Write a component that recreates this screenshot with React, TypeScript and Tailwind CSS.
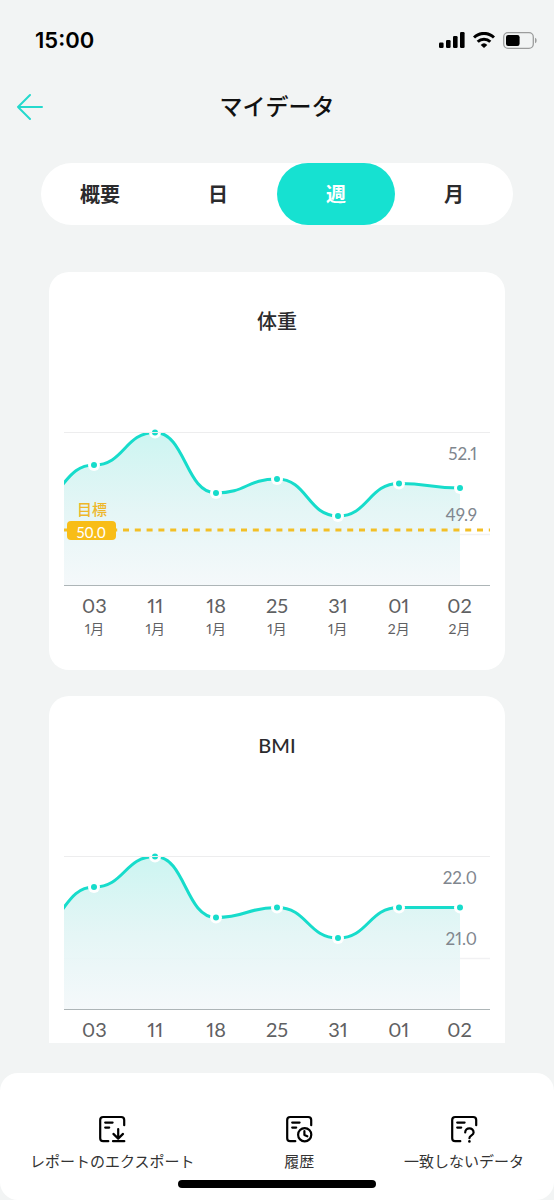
import React from 'react';

type ChartData = {
  id: string;
  title: string;
  // y of each weekly point, the first one lies left of the visible plot
  points: number[];
  ticks: string[];
  gridY: number;
  showMonths?: boolean;
  target?: { label: string; value: string; y: number };
};

const tabs = ['概要', '日', '週', '月'];

const weeks = [
  { day: '03', month: '1月' },
  { day: '11', month: '1月' },
  { day: '18', month: '1月' },
  { day: '25', month: '1月' },
  { day: '31', month: '1月' },
  { day: '01', month: '2月' },
  { day: '02', month: '2月' },
];

const charts: ChartData[] = [
  {
    id: 'weight',
    title: '体重',
    points: [78, 41, 8.5, 69, 55, 92, 59.5, 64],
    ticks: ['52.1', '49.9'],
    gridY: 110.5,
    showMonths: true,
    target: { label: '目標', value: '50.0', y: 106 },
  },
  {
    id: 'bmi',
    title: 'BMI',
    points: [81, 39, 8.5, 69.5, 59.5, 90, 59.5, 59.5],
    ticks: ['22.0', '21.0'],
    gridY: 110.5,
  },
];

const STEP = 61;
const TOP = 8;
const BASE = 161.5;
const pointX = (i: number) => 30 + STEP * (i - 1);

const curvePath = (points: number[]) =>
  points
    .map((y, i) => {
      const x = pointX(i);
      if (i === 0) return `M${x} ${y}`;
      const mid = x - STEP / 2;
      return `C${mid} ${points[i - 1]} ${mid} ${y} ${x} ${y}`;
    })
    .join(' ');

const TrendChart = ({ chart }: { chart: ChartData }) => {
  const { id, points, ticks, gridY, target } = chart;
  const line = curvePath(points);
  const lastX = pointX(points.length - 1);

  return (
    <svg viewBox="0 0 426 166" className="w-full block" role="img" aria-label={chart.title}>
      <defs>
        <linearGradient id={`${id}-fill`} gradientUnits="userSpaceOnUse" x1="0" y1={TOP} x2="0" y2={BASE}>
          <stop offset="0" stopColor="#c8f4f0" />
          <stop offset="0.5" stopColor="#e2f5f5" />
          <stop offset="1" stopColor="#f4f8fa" />
        </linearGradient>
        <clipPath id={`${id}-plot`}>
          <rect x="0" y={TOP} width="426" height={BASE - TOP} />
        </clipPath>
      </defs>

      <path d={`M0 ${gridY}H426`} stroke="#f1f1f3" strokeWidth="1.5" />
      <g clipPath={`url(#${id}-plot)`}>
        <path
          d={`${line} V${BASE} H${pointX(0)} Z`}
          fill={`url(#${id}-fill)`}
          fillOpacity="0.92"
        />
        <path d={line} fill="none" stroke="#17dccb" strokeWidth="3" />
        {points.map((y, i) => (
          <circle key={i} cx={pointX(i)} cy={y} r="6" fill="#fff" />
        ))}
      </g>
      {points.slice(1).map((y, i) => (
        <circle key={i} cx={pointX(i + 1)} cy={y} r="3" fill="#17dccb" />
      ))}
      <path d="M0 8.5H426" stroke="#ededee" />
      <path d={`M0 ${BASE}H426`} stroke="#adb5b7" />

      {/* Target line */}
      {target && (
        <g>
          <path d={`M0 ${target.y}H426`} stroke="#f3bf26" strokeWidth="3" strokeDasharray="6 5.8" />
          <rect x="3" y={target.y - 9} width="49" height="19" rx="4" fill="#f8bd17" />
          <text
            x="27"
            y={target.y + 8}
            textAnchor="middle"
            className="font-['Lato',sans-serif] text-[15px] fill-white"
          >
            {target.value}
          </text>
          <text
            x="28"
            y={target.y - 15}
            textAnchor="middle"
            className="font-['Noto_Sans_CJK_JP',sans-serif] text-[15px] font-medium fill-[#eeb72a]"
          >
            {target.label}
          </text>
        </g>
      )}

      {ticks.map((tick, i) => (
        <text
          key={tick}
          x={lastX + 17}
          y={36 + i * STEP}
          textAnchor="end"
          className="font-['Lato',sans-serif] text-[17px] proportional-nums fill-[#80868e]"
        >
          {tick}
        </text>
      ))}
    </svg>
  );
};

const ChartCard = ({ chart }: { chart: ChartData }) => (
  <section className="shrink-0 bg-white rounded-[20px] px-[15px] pt-[35px] pb-[30px]">
    <h2 className="mb-[89px] text-center text-xl leading-7 font-medium text-[#2b2b2d]">{chart.title}</h2>
    <TrendChart chart={chart} />
    <ul className="grid grid-cols-7 mt-[3px] text-center proportional-nums text-[#5f6163]">
      {weeks.map((week) => (
        <li key={week.day}>
          <p className="text-xl leading-6">{week.day}</p>
          {chart.showMonths && <p className="text-sm leading-[23px]">{week.month}</p>}
        </li>
      ))}
    </ul>
  </section>
);

const StatusBar = () => (
  <div className="h-20 shrink-0 flex items-center justify-between pl-[35px] pr-[17px]">
    <span className="font-['Inter',sans-serif] text-[22px] font-semibold text-black">15:00</span>
    <div className="flex items-center gap-2 text-black">
      {/* Signal */}
      <svg width="26" height="16" viewBox="0 0 26 16" fill="currentColor">
        <rect x="0" y="10.5" width="4.6" height="5.5" rx="1.2" />
        <rect x="7" y="8" width="4.6" height="8" rx="1.2" />
        <rect x="14" y="4" width="4.6" height="12" rx="1.2" />
        <rect x="21" y="0" width="4.6" height="16" rx="1.2" />
      </svg>
      {/* Wifi */}
      <svg width="22" height="16" viewBox="0 0 22 16" fill="none" stroke="currentColor" strokeWidth="3">
        <path d="M1 5.5a14.2 14.2 0 0 1 20 0" />
        <path d="M4.7 9.7a9 9 0 0 1 12.6 0" />
        <path d="M11 16l-3.3-3.1a4.8 4.8 0 0 1 6.6 0Z" fill="currentColor" stroke="none" />
      </svg>
      {/* Battery */}
      <svg width="34" height="17" viewBox="0 0 34 17" fill="none">
        <rect x="0.7" y="0.7" width="29.6" height="15.6" rx="4.3" stroke="#9c9d9d" strokeWidth="1.3" />
        <rect x="3" y="3" width="13.6" height="11" rx="2.2" fill="currentColor" />
        <path d="M32 5.8c2.2.8 2.2 4.6 0 5.4Z" fill="#9c9d9d" />
      </svg>
    </div>
  </div>
);

// Sheet outline shared by the three footer icons
const SheetIcon = ({ children }: { children: React.ReactNode }) => (
  <svg
    width="28"
    height="28"
    viewBox="0 0 28 28"
    fill="none"
    stroke="currentColor"
    strokeWidth="2.2"
    strokeLinecap="round"
    strokeLinejoin="round"
  >
    <path d="M10.3 26.2H5.2a3 3 0 0 1-3-3V5a3 3 0 0 1 3-3h18a3 3 0 0 1 3 3v5.2" />
    <path d="M7.2 7.6h7.4M7.2 12.6h4" />
    {children}
  </svg>
);

const actions = [
  {
    label: 'レポートのエクスポート',
    icon: (
      <SheetIcon>
        <path d="M20.2 14v9.2M15.4 18.9l4.8 4.7 4.8-4.7M15 26.2h11.3" />
      </SheetIcon>
    ),
  },
  {
    label: '履歴',
    icon: (
      <SheetIcon>
        <circle cx="19.7" cy="19.7" r="6.6" />
        <path d="M19.4 16.2v3.9l2.9 1.2" />
      </SheetIcon>
    ),
  },
  {
    label: '一致しないデータ',
    icon: (
      <SheetIcon>
        <path d="M15.2 17.4c0-5.4 8.4-5.4 8.4 0 0 3-4.2 2.8-4.2 5.8" />
        <path d="M19.4 26.4v.1" strokeWidth="2.6" />
      </SheetIcon>
    ),
  },
];

const App = () => {
  return (
    <div className="h-screen flex flex-col bg-[#f2f4f4] font-['Lato','Noto_Sans_CJK_JP',sans-serif]" lang="ja">
      <StatusBar />

      {/* Header */}
      <header className="h-[52px] shrink-0 grid grid-cols-[1fr_auto_1fr] items-center px-4">
        <button aria-label="戻る" className="justify-self-start text-[#25d9cd]">
          <svg
            width="27"
            height="27"
            viewBox="0 0 27 27"
            className="block"
            fill="none"
            stroke="currentColor"
            strokeWidth="2"
            strokeLinecap="round"
            strokeLinejoin="round"
          >
            <path d="M26 14H2M14 2L2 14l12 12" />
          </svg>
        </button>
        <h1 className="text-[23px] leading-8 font-medium text-[#111]">マイデータ</h1>
      </header>

      {/* Period tabs */}
      <nav className="shrink-0 mx-[41px] mt-[31px] h-[62px] grid grid-cols-4 bg-white rounded-full">
        {tabs.map((tab) => (
          <button
            key={tab}
            aria-pressed={tab === '週'}
            className={
              tab === '週'
                ? 'rounded-full bg-[#16e1d1] text-xl font-bold text-white'
                : 'rounded-full text-xl font-bold text-[#2b2b2d]'
            }
          >
            {tab}
          </button>
        ))}
      </nav>

      {/* Charts */}
      <main className="flex-1 min-h-0 mt-[47px] mb-[30px] mx-[49px] flex flex-col gap-[26px] overflow-y-auto [scrollbar-width:none]">
        {charts.map((chart) => (
          <ChartCard key={chart.id} chart={chart} />
        ))}
      </main>

      {/* Footer */}
      <footer className="relative shrink-0 h-[127px] bg-white rounded-[18px] flex items-start justify-between px-[30px] pt-[42px]">
        {actions.map((action) => (
          <button key={action.label} className="flex flex-col items-center gap-[7px] text-black">
            {action.icon}
            <span className="text-[15px] leading-[22px] text-[#333]">{action.label}</span>
          </button>
        ))}
        <div className="absolute bottom-3 left-1/2 -translate-x-1/2 h-2 w-[198px] rounded-full bg-black" />
      </footer>
    </div>
  );
};

export default App;
